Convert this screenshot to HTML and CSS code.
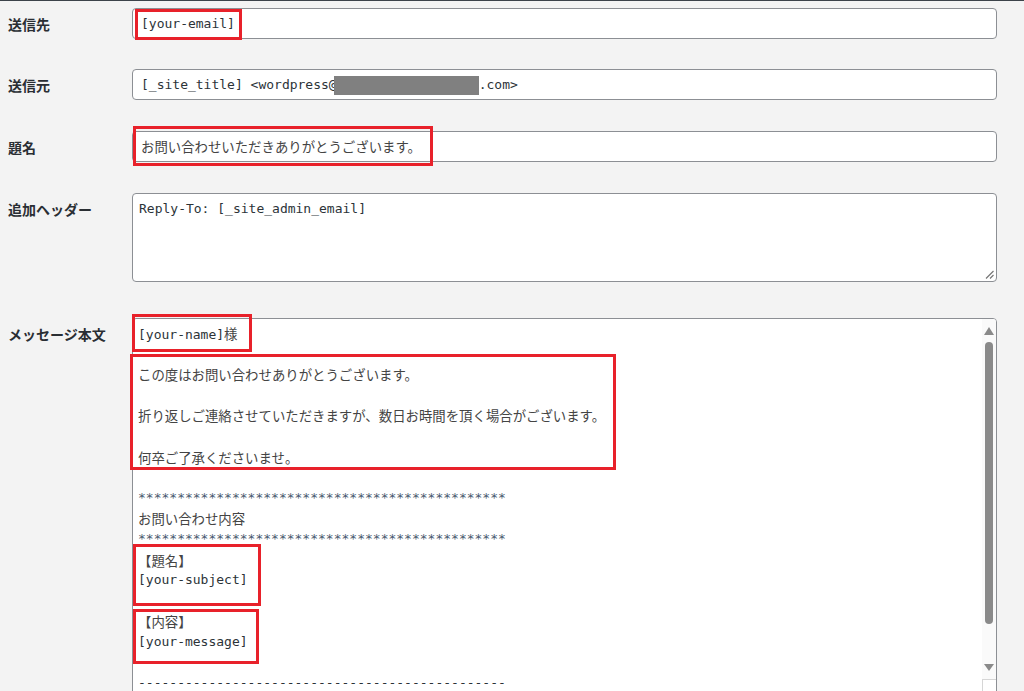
FILE: index.html
```html
<!DOCTYPE html>
<html lang="ja">
<head>
<meta charset="utf-8">
<title>メール設定</title>
<link rel="stylesheet" href="styles.css">
</head>
<body>
<div class="page">
  <div class="row r1">
    <div class="label">送信先</div>
    <div class="input"><span class="m">[your-email]</span></div>
  </div>
  <div class="row r2">
    <div class="label">送信元</div>
    <div class="input"><span class="m">[_site_title] &lt;wordpress@</span><span class="redact"></span><span class="m">.com&gt;</span></div>
  </div>
  <div class="row r3">
    <div class="label">題名</div>
    <div class="input"><span class="ja">お問い合わせいただきありがとうございます。</span></div>
  </div>
  <div class="row r4">
    <div class="label">追加ヘッダー</div>
    <div class="ta header-ta">
      <span class="m">Reply-To: [_site_admin_email]</span>
      <svg class="grip" width="9" height="9" viewBox="0 0 9 9"><path d="M1 8.5 L8.5 1 M5 8.5 L8.5 5" stroke="#777" stroke-width="1.2" fill="none"/></svg>
    </div>
  </div>
  <div class="row r5">
    <div class="label">メッセージ本文</div>
    <div class="ta body-ta">
      <div class="body-text">
        <div class="ln"><span class="m">[your-name]</span><span class="ja">様</span></div>
        <div class="ln"></div>
        <div class="ln"><span class="ja">この度はお問い合わせありがとうございます。</span></div>
        <div class="ln"></div>
        <div class="ln"><span class="ja">折り返しご連絡させていただきますが、数日お時間を頂く場合がございます。</span></div>
        <div class="ln"></div>
        <div class="ln"><span class="ja">何卒ご了承くださいませ。</span></div>
        <div class="ln"></div>
        <div class="ln"><span class="m star">***********************************************</span></div>
        <div class="ln"><span class="ja">お問い合わせ内容</span></div>
        <div class="ln"><span class="m star">***********************************************</span></div>
        <div class="ln"><span class="ja">【題名】</span></div>
        <div class="ln"><span class="m">[your-subject]</span></div>
        <div class="ln"></div>
        <div class="ln"><span class="ja">【内容】</span></div>
        <div class="ln"><span class="m">[your-message]</span></div>
        <div class="ln"></div>
        <div class="ln"><span class="m">-----------------------------------------------</span></div>
      </div>
      <div class="sb">
        <div class="sb-up"></div>
        <div class="sb-thumb"></div>
        <div class="sb-down"></div>
        <div class="sb-corner"></div>
      </div>
    </div>
  </div>

  <div class="mark mk1"></div>
  <div class="mark mk2"></div>
  <div class="mark mk3"></div>
  <div class="mark mk4"></div>
  <div class="mark mk5"></div>
  <div class="mark mk6"></div>
</div>
</body>
</html>
```

FILE: styles.css
```css
html, body {
  margin: 0;
  height: 691px;
  overflow: hidden;
}
body {
  box-sizing: border-box;
  background: #f3f3f3;
  border-top: 1px solid #3c434a;
  font-family: "Noto Sans CJK JP", sans-serif;
  color: #1d2327;
}
.page {
  position: relative;
  padding: 7px 0 0 8px;
}
.row {
  display: grid;
  grid-template-columns: 124px 865px;
  align-items: start;
}
.r1 { margin-bottom: 30px; }
.r2, .r3 { margin-bottom: 31px; }
.r4 { margin-bottom: 36px; }

.label {
  font-size: 14px;
  font-weight: 700;
  line-height: 20px;
  padding-top: 5.5px;
  color: #2a2e33;
  white-space: nowrap;
}

.input {
  box-sizing: border-box;
  height: 31px;
  border: 1px solid #8c8f94;
  border-radius: 4px;
  background: #fff;
  padding: 0 8px;
  line-height: 29px;
  white-space: nowrap;
  font-family: "DejaVu Sans Mono", monospace;
  font-size: 13px;
}
.m {
  font-family: "DejaVu Sans Mono", monospace;
  font-size: 13px;
  color: #2c3338;
}
.star { color: #4a5a70; }
.ja {
  font-family: "Noto Sans CJK JP", sans-serif;
  font-size: 13.4px;
  color: #444;
}
.redact {
  display: inline-block;
  width: 145px;
  height: 19px;
  margin-left: -3px;
  background: #808080;
  vertical-align: middle;
}

.ta {
  box-sizing: border-box;
  border: 1px solid #8c8f94;
  border-radius: 4px;
  background: #fff;
  line-height: 20.6px;
  font-family: "DejaVu Sans Mono", monospace;
  font-size: 13px;
}
.header-ta {
  position: relative;
  height: 89px;
  padding: 5px 6px;
}
.grip {
  position: absolute;
  right: 2px;
  bottom: 2px;
}
.body-ta {
  height: 420px;
  display: flex;
  border-radius: 4px 4px 0 0;
}
.body-text {
  flex: 1;
  padding: 4px 5px;
  white-space: nowrap;
}
.ln { height: 20.6px; }

.sb {
  width: 14px;
  background: #fafafa;
  display: flex;
  flex-direction: column;
  align-items: center;
  border-radius: 0 3px 0 0;
}
.sb-up {
  margin-top: 8px;
  width: 0;
  height: 0;
  border-left: 5px solid transparent;
  border-right: 5px solid transparent;
  border-bottom: 8px solid #8a8a8a;
}
.sb-thumb {
  margin-top: 7px;
  width: 8px;
  height: 282px;
  border-radius: 4px;
  background: #8a8a8a;
}
.sb-down {
  margin-top: 40px;
  width: 0;
  height: 0;
  border-left: 5px solid transparent;
  border-right: 5px solid transparent;
  border-top: 7px solid #8a8a8a;
}
.sb-corner {
  margin-top: 8px;
  align-self: stretch;
  height: 14px;
  border-top: 1px solid #d6d6d6;
  border-left: 1px solid #d6d6d6;
  background: #fff;
}

.mark {
  position: absolute;
  box-sizing: border-box;
  border: 3px solid #e8212a;
}
.mk1 { left: 135px; top: 8px;   width: 107px; height: 31px; }
.mk2 { left: 133px; top: 125px; width: 300px; height: 40px; }
.mk3 { left: 132px; top: 313px; width: 120px; height: 38px; }
.mk4 { left: 130px; top: 353px; width: 486px; height: 116px; }
.mk5 { left: 133px; top: 543px; width: 128px; height: 62px; }
.mk6 { left: 133px; top: 608px; width: 126px; height: 55px; }
```
